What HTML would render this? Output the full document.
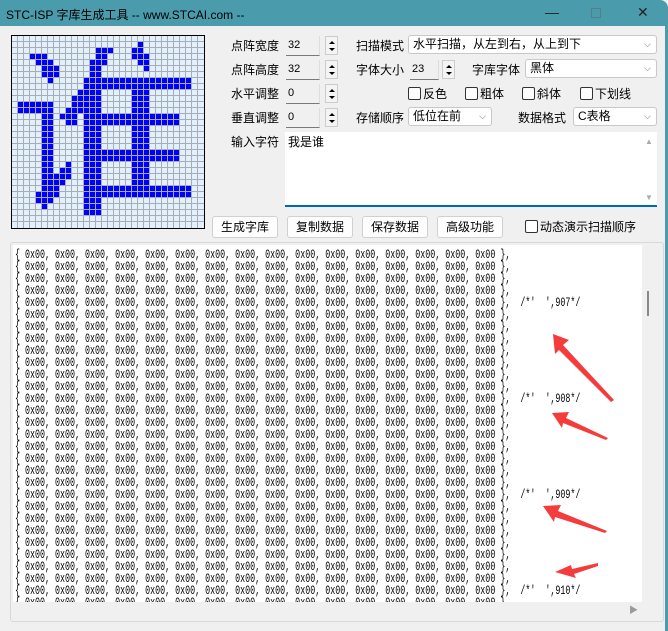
<!DOCTYPE html>
<html><head><meta charset="utf-8"><style>
*{margin:0;padding:0;box-sizing:border-box}
body{width:668px;height:631px;overflow:hidden;background:#f0f0f0;font-family:"Liberation Sans","Noto Sans CJK SC",sans-serif;font-size:12px;color:#000;position:relative}
.a{position:absolute;white-space:nowrap}
#title{left:0;top:0;width:668px;height:26px;background:#4a9bab;border-top-right-radius:8px}
.inp{position:absolute;background:#f0f0f0;border-bottom:1px solid #7a7a7a;border-right:1px solid #ddd;font-size:11px;padding:1px 2px;line-height:16px}
.spin{position:absolute;width:13px;height:19px;border:1px solid #ccc;background:#f4f4f4}
.spin:before{content:"";position:absolute;left:3px;top:4px;border:3px solid transparent;border-bottom:3px solid #000;border-top:0}
.spin:after{content:"";position:absolute;left:3px;top:11px;border:3px solid transparent;border-top:3px solid #000;border-bottom:0}
.cb{position:absolute;background:#fff;border:1px solid #c8c8c8;border-radius:3px;height:19px;padding:0 4px;line-height:17px}
.cb:after{content:"\2335";position:absolute;right:5px;top:0;font-size:9px;color:#666}
.chk{position:absolute;line-height:16px}
.chk:before{content:"";display:inline-block;width:11px;height:11px;border:1px solid #333;border-radius:2px;vertical-align:-2px;margin-right:2px;background:#fff}
.btn{position:absolute;top:216px;height:22px;width:66px;background:#fdfdfd;border:1px solid #d0d0d0;border-radius:3px;text-align:center;line-height:20px}
#code{position:absolute;left:13px;top:245px;width:629px;height:357px;background:#fff;overflow:hidden;font-family:"Liberation Mono",monospace;font-size:12.5px}
#code div{position:absolute;left:2px;height:12px;line-height:12px;white-space:pre;transform:scaleX(0.667);transform-origin:0 0}
</style></head><body>
<div id="title" class="a"></div>
<div class="a" style="left:6px;top:6px;font-size:12px">STC-ISP 字库生成工具 -- www.STCAI.com --</div>
<div class="a" style="left:545px;top:4px;font-size:14px;color:#222">—</div>
<div class="a" style="left:591px;top:8px;width:10px;height:10px;border:1px solid #5a7c88"></div>
<div class="a" style="left:637px;top:4px;font-size:14px;color:#222">✕</div>
<div class="a" style="left:665px;top:26px;width:3px;height:605px;background:#4a9bab"></div>

<svg class="a" style="left:11px;top:35px" width="194" height="194" id="g"></svg>

<div class="a" style="left:231px;top:37px">点阵宽度</div>
<div class="a" style="left:231px;top:61px">点阵高度</div>
<div class="a" style="left:231px;top:85px">水平调整</div>
<div class="a" style="left:231px;top:109px">垂直调整</div>
<div class="a" style="left:231px;top:133px">输入字符</div>
<div class="inp" style="left:286px;top:36px;width:34px;height:20px">32</div>
<div class="inp" style="left:286px;top:60px;width:34px;height:20px">32</div>
<div class="inp" style="left:286px;top:84px;width:34px;height:20px">0</div>
<div class="inp" style="left:286px;top:108px;width:34px;height:20px">0</div>
<div class="spin" style="left:325px;top:36px"></div>
<div class="spin" style="left:325px;top:60px"></div>
<div class="spin" style="left:325px;top:84px"></div>
<div class="spin" style="left:325px;top:108px"></div>

<div class="a" style="left:356px;top:37px">扫描模式</div>
<div class="cb" style="left:408px;top:35px;width:249px">水平扫描，从左到右，从上到下</div>
<div class="a" style="left:356px;top:61px">字体大小</div>
<div class="inp" style="left:410px;top:60px;width:29px;height:20px">23</div>
<div class="spin" style="left:442px;top:60px"></div>
<div class="a" style="left:472px;top:61px">字库字体</div>
<div class="cb" style="left:525px;top:59px;width:132px">黑体</div>
<div class="chk" style="left:408px;top:86px">反色</div>
<div class="chk" style="left:465px;top:86px">粗体</div>
<div class="chk" style="left:522px;top:86px">斜体</div>
<div class="chk" style="left:580px;top:86px">下划线</div>
<div class="a" style="left:356px;top:109px">存储顺序</div>
<div class="cb" style="left:408px;top:107px;width:84px">低位在前</div>
<div class="a" style="left:518px;top:109px">数据格式</div>
<div class="cb" style="left:573px;top:107px;width:84px">C表格</div>
<div class="a" style="left:285px;top:132px;width:372px;height:75px;background:#fff;border-bottom:2px solid #0067c0;padding:1px 3px">我是谁</div>
<div class="a" style="left:645px;top:137px;font-size:8px;color:#aaa">▲</div>
<div class="a" style="left:645px;top:193px;font-size:8px;color:#aaa">▼</div>

<div class="btn" style="left:212px">生成字库</div>
<div class="btn" style="left:287px">复制数据</div>
<div class="btn" style="left:362px">保存数据</div>
<div class="btn" style="left:437px">高级功能</div>
<div class="chk" style="left:525px;top:219px">动态演示扫描顺序</div>

<div id="code"></div>
<div class="a" style="left:642px;top:245px;width:18px;height:357px;background:#f0f0f0"></div>
<div class="a" style="left:647px;top:291px;width:2px;height:25px;background:#888"></div>
<div class="a" style="left:13px;top:602px;width:647px;height:16px;background:#f0f0f0"></div>
<div class="a" style="left:629px;top:603px;font-size:9px;color:#999">▶</div>
<div class="a" style="left:10px;top:242px;width:654px;height:380px;border:1px solid #d8d8d8;border-radius:3px"></div>

<svg class="a" style="left:0;top:0" width="668" height="631">
<g fill="#f53c3c">
<polygon points="553,334 569,340 563,345 614,400 611,402 559,350 555,354"/>
<polygon points="552,413 569,412 566,418 608,438 606,440 563,423 562,428"/>
<polygon points="543,506 561,505 558,511 607,531 605,533 555,517 554,522"/>
<polygon points="555,572 571,565 572,569 598,563 598,566 574,574 576,578"/>
</g>
</svg>
<script>
var rows={1:[[21,21]],2:[[14,16],[20,21]],3:[[3,5],[14,15],[20,22]],4:[[4,6],[13,15],[21,22]],5:[[5,7],[13,14],[22,22]],6:[[5,7],[13,14]],7:[[6,6],[12,29]],8:[[12,29]],9:[[11,14],[20,22]],10:[[10,14],[20,22]],11:[[1,6],[10,14],[20,22]],12:[[1,6],[9,14],[20,22]],13:[[5,6],[8,10],[12,27]],14:[[5,6],[9,10],[12,27]],15:[[5,6],[12,14],[20,22]],16:[[5,6],[12,14],[20,22]],17:[[5,6],[12,14],[20,22]],18:[[5,6],[12,14],[20,22]],19:[[5,6],[12,27]],20:[[5,6],[12,27]],21:[[5,6],[9,9],[12,14],[20,22]],22:[[5,6],[8,9],[12,14],[20,22]],23:[[5,9],[12,14],[20,22]],24:[[5,8],[12,14],[20,22]],25:[[5,7],[12,29]],26:[[4,7],[12,29]],27:[[4,6],[12,14]],28:[[5,5],[12,14]],29:[[12,14]]};
var s='<rect x="0.5" y="0.5" width="193" height="193" fill="#e2f0fc" stroke="#000"/>';
for(var i=1;i<32;i++){var p=1+i*6-0.5;s+='<line x1="'+p+'" y1="1" x2="'+p+'" y2="193" stroke="#a8acb4"/><line y1="'+p+'" x1="1" y2="'+p+'" x2="193" stroke="#a8acb4"/>';}
for(var key in rows){var r=parseInt(key,10);rows[key].forEach(function(g){for(var c=g[0];c<=g[1];c++)s+='<rect x="'+(1+c*6)+'" y="'+(1+r*6)+'" width="5" height="5" fill="#0000ff"/>';});}
document.getElementById('g').innerHTML=s;
var h='',line='{ '+Array(16).fill('0x00').join(', ')+' },';
for(var k=0;k<30;k++){var t=line;if(k%8==4)t+='  /*\'  \',' +(907+(k-4)/8)+'*/';h+='<div style="top:'+(4+k*12)+'px">'+t+'</div>';}
document.getElementById('code').innerHTML=h;
</script>
</body></html>
